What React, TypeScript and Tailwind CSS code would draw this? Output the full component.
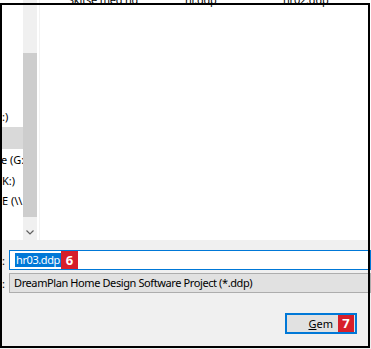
import React from "react";

export default function App() {
  const font = { fontFamily: '"Noto Sans", "Open Sans", sans-serif' };
  return (
    <div
      className="relative w-[371px] h-[349px] overflow-hidden bg-white text-[11px] text-black"
      style={font}
    >
      {/* top area: navigation + file list */}
      <div className="flex h-[240px]">
        {/* navigation pane (clipped) */}
        <div className="w-[23px] overflow-hidden flex flex-col pt-[105px]">
          <div className="h-[22px] flex items-center whitespace-nowrap pl-[2px] leading-none">:)</div>
          <div className="h-[22px] bg-[#d9d9d9]" />
          <div className="h-[21px] flex items-center whitespace-nowrap pl-[1px] leading-none">e (G:</div>
          <div className="h-[20px] flex items-center whitespace-nowrap pl-[2px] leading-none">K:)</div>
          <div className="h-[21px] flex items-center whitespace-nowrap pl-[2px] leading-none">E (\\</div>
        </div>
        {/* scrollbar */}
        <div className="w-[14px] flex flex-col bg-[#f0f0f0]">
          <div className="h-[53px]" />
          <div className="h-[164px] bg-[#cdcdcd]" />
          <div className="flex-1 flex items-center justify-center">
            <svg width="8" height="5" viewBox="0 0 8 5" className="mt-[8px]">
              <path d="M0.5 0.5 L4 4 L7.5 0.5" fill="none" stroke="#606060" strokeWidth="1.2" />
            </svg>
          </div>
        </div>
        <div className="w-[2px]" />
        <div className="w-[1px] bg-[#f2f2f2]" />
        {/* file list */}
        <div className="flex-1 relative">
          <div className="relative z-10 flex mt-[-7px] leading-[14px] whitespace-nowrap tracking-[-0.2px]">
            <div className="ml-[28px] w-[117px]">Skitse med hd</div>
            <div className="w-[98px]">hr.ddp</div>
            <div>hr02.ddp</div>
          </div>
        </div>
      </div>

      {/* bottom area */}
      <div className="h-[109px] bg-[#f0f0f0] flex flex-col pt-[10px]">
        {/* file name row */}
        <div className="flex items-center h-[20px]">
          <div className="w-[9px] pl-[2px] leading-none">:</div>
          <div className="flex-1 h-[20px] border border-[#0078d7] bg-white flex items-center pl-[5px]">
            <span className="bg-[#0078d7] text-white leading-[14px] h-[14px] px-[1px] tracking-[-0.4px]">hr03.ddp</span>
            <span className="bg-[#d71f2a] text-white font-bold text-[13px] h-[18px] w-[17px] flex items-center justify-center leading-none">
              6
            </span>
          </div>
        </div>
        {/* type row */}
        <div className="flex items-center h-[20px] mt-[3px]">
          <div className="w-[9px] pl-[2px] leading-none">:</div>
          <div className="flex-1 h-[20px] border border-[#adadad] bg-[#e1e1e1] flex items-center pl-[4px] whitespace-nowrap tracking-[-0.4px]">
            DreamPlan Home Design Software Project (*.ddp)
          </div>
        </div>
        {/* button row */}
        <div className="flex justify-end mt-[20px] pr-[14px]">
          <div className="w-[72px] h-[21px] border-2 border-[#0078d7] bg-[#e1e1e1] flex items-center justify-end pr-[1px]">
            <span className="leading-none mr-[5px]">
              <span className="underline">G</span>em
            </span>
            <span className="bg-[#d71f2a] text-white font-bold text-[13px] h-[17px] w-[16px] flex items-center justify-center leading-none">
              7
            </span>
          </div>
        </div>
      </div>

      {/* outer black frame */}
      <div className="absolute left-0 top-[3px] w-[370px] h-[345px] border-2 border-black pointer-events-none" />
    </div>
  );
}
